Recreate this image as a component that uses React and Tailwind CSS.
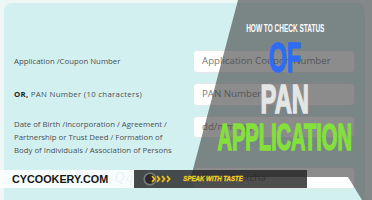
import React from "react";

const sans = "font-['Open_Sans',sans-serif]";

function Field({ children, h = "h-[23px]" }) {
  return (
    <div className={`w-[162px] ${h} bg-white rounded-[4px] border border-[#e3e9ea] flex items-center pl-[8px] text-[9.7px] text-[#7a7a7a] ${sans} whitespace-nowrap overflow-hidden`}>
      {children}
    </div>
  );
}

export default function App() {
  return (
    <div className="relative w-[372px] h-[200px] overflow-hidden bg-[#eef6f6] pl-[4px] pt-[3px]">
      {/* form card */}
      <div className={`w-[361px] h-[240px] rounded-[8px] bg-[#d3f0f1] pt-[47px] flex flex-col gap-[10px] ${sans} text-[#4a4f52]`}>
        <div className="flex items-center">
          <div className="w-[189px] pl-[10px] text-[7.8px] leading-[13px]">Application /Coupon Number</div>
          <Field>Application Coupon Number</Field>
        </div>
        <div className="flex items-center">
          <div className="w-[189px] pl-[10px] text-[7.8px] leading-[13px] tracking-[0.3px] whitespace-nowrap">
            <span className="font-bold text-[#222]">OR,</span> PAN Number (10 characters)
          </div>
          <Field>PAN Number</Field>
        </div>
        <div className="flex items-start">
          <div className="w-[189px] pl-[10px] pt-[2px] text-[7.8px] leading-[13px] whitespace-nowrap">
            Date of Birth /Incorporation / Agreement /<br />
            Partnership or Trust Deed / Formation of<br />
            Body of Individuals / Association of Persons
          </div>
          <Field h="h-[22px]">dd/mm/yyyy</Field>
        </div>
        <div className="flex items-center">
          <div className="w-[189px] pl-[72px] text-[12px] italic text-[#93a4c6] font-['DejaVu_Serif',serif] tracking-[1px]">7Yv1 Qq</div>
          <Field h="h-[22px]">Enter Captcha</Field>
        </div>
      </div>

      {/* dark diagonal overlay */}
      <div className="absolute inset-0 bg-[rgba(64,64,64,0.6)] [clip-path:polygon(238px_0,372px_0,372px_200px,362px_200px,348px_177px,191px_177px)]" />

      {/* title */}
      <div className="absolute left-[198px] top-0 w-[174px] h-[200px] flex flex-col items-center font-['Liberation_Sans',sans-serif] font-bold leading-none">
        <div className="mt-[22.5px] h-[11px] text-[11px] text-white scale-x-[0.59] whitespace-nowrap">HOW TO CHECK STATUS</div>
        <div className="mt-[2px] h-[43px] text-[43px] text-[#2f6cf5] scale-x-[0.54] whitespace-nowrap [-webkit-text-stroke:1.5px_#2f6cf5]">OF</div>
        <div className="mt-0 h-[41px] text-[41px] text-[#e4e6e6] scale-x-[0.58] whitespace-nowrap [-webkit-text-stroke:1.5px_#e4e6e6]">PAN</div>
        <div className="mt-[-0.5px] h-[37.5px] text-[37.5px] text-[#84e03a] scale-x-[0.535] whitespace-nowrap [-webkit-text-stroke:1.5px_#84e03a]">APPLICATION</div>
      </div>

      {/* watermark bar */}
      <div className="absolute left-0 top-[170px] h-[18px] flex">
        <div className="w-[134px] h-full bg-[rgba(255,255,255,0.82)] flex items-center pl-[12px] font-['Liberation_Sans',sans-serif] font-bold text-[10.8px] text-[#151515]">
          CYCOOKERY.COM
        </div>
        <div className="w-[173px] h-full bg-[rgba(34,34,34,0.8)] flex items-center pl-[9px]">
          <svg width="32" height="14" viewBox="0 0 32 14" className="shrink-0">
            <circle cx="7" cy="7" r="5.8" fill="#2a2a2a" stroke="#7a7a7a" strokeWidth="1.6" />
            <path d="M9 4.2 L11.6 7 L9 9.8" fill="none" stroke="#f2c21b" strokeWidth="1.7" />
            <path d="M14 4.2 L16.6 7 L14 9.8" fill="none" stroke="#f2c21b" strokeWidth="1.7" />
            <path d="M19 4.2 L21.6 7 L19 9.8" fill="none" stroke="#f2c21b" strokeWidth="1.7" />
            <path d="M24 4.2 L26.6 7 L24 9.8" fill="none" stroke="#f2c21b" strokeWidth="1.7" />
          </svg>
          <div className="ml-[7px] w-[62px] flex justify-center">
            <span className="font-['Liberation_Sans',sans-serif] font-bold italic text-[8px] text-[#f4d21f] scale-x-[0.76] whitespace-nowrap [-webkit-text-stroke:0.3px_#f4d21f]">
              SPEAK WITH TASTE
            </span>
          </div>
        </div>
      </div>
    </div>
  );
}
